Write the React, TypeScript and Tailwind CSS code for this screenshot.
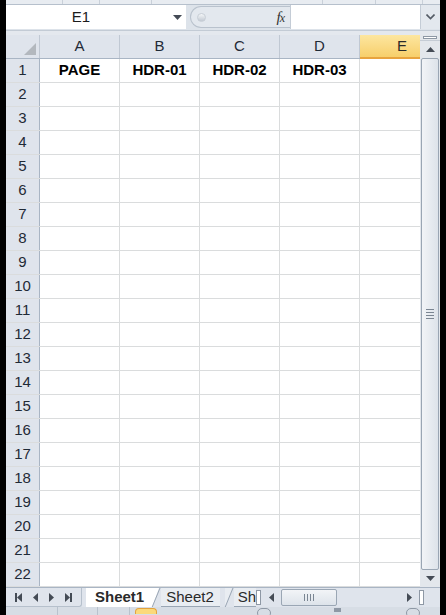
import React from "react";

const rows = Array.from({ length: 22 }, (_, i) => i + 1);
const cols = [
  { key: "A", w: "w-[80px]", hdr: "PAGE" },
  { key: "B", w: "w-[80px]", hdr: "HDR-01" },
  { key: "C", w: "w-[80px]", hdr: "HDR-02" },
  { key: "D", w: "w-[80px]", hdr: "HDR-03" },
];

const Tri = ({ dir, className = "" }: { dir: "up" | "down" | "left" | "right"; className?: string }) => {
  const pts = {
    up: "0,5 4.5,0 9,5",
    down: "0,0 9,0 4.5,5",
    left: "5,0 5,9 0,4.5",
    right: "0,0 0,9 5,4.5",
  }[dir];
  const vert = dir === "up" || dir === "down";
  return (
    <svg width={vert ? 9 : 5} height={vert ? 5 : 9} className={className}>
      <polygon points={pts} fill="#444b55" />
    </svg>
  );
};

const RibbonEdge = () => (
  <div className="h-[5px] flex bg-[#e8ecf1] border-b border-[#b6c0cc]">
    <div className="w-[57px] border-r border-[#c9d0d9]" />
    <div className="w-[37px] border-r border-[#c9d0d9]" />
    <div className="w-[52px] border-r border-[#c9d0d9]" />
    <div className="w-[171px] border-r border-[#c9d0d9]" />
    <div className="w-[53px] border-r border-[#c9d0d9]" />
    <div className="w-[47px] border-r border-[#c9d0d9]" />
  </div>
);

const FormulaBar = () => (
  <div className="h-[25px] flex bg-[#dde3ea]">
    <div className="w-[180px] h-[24px] bg-white flex items-center">
      <div className="w-[150px] text-center text-[15px] text-[#1c1c1c]">E1</div>
      <div className="flex-1 pl-[17px] flex items-center">
        <Tri dir="down" />
      </div>
    </div>
    <div className="w-[104px] h-[24px] flex items-center pl-[4px]">
      <div className="h-[22px] flex-1 rounded-l-full border border-r-0 border-[#b9c2cd] bg-[#e3e8ee] flex items-center justify-between pl-[6px] pr-[6px]">
        <div className="w-[9px] h-[9px] rounded-full bg-gradient-to-b from-[#f4f6f8] to-[#c3cad3] border border-[#c7ced6]" />
        <span className="italic text-[15px] text-[#333] font-['Liberation_Serif',serif] tracking-[-1px]">
          f<span className="text-[12px]">x</span>
        </span>
      </div>
    </div>
    <div className="w-[130px] h-[24px] bg-white border-l border-[#c4ccd6]" />
    <div className="w-[20px] h-[24px] flex items-center justify-center bg-[#e3e8ee] border-l border-[#c4ccd6]">
      <svg width="9" height="6">
        <polyline points="0.5,0.5 4.5,4.5 8.5,0.5" fill="none" stroke="#555c66" strokeWidth="1.6" />
      </svg>
    </div>
  </div>
);

const ColumnHeader = () => (
  <div className="h-[24px] flex bg-[#dfe4ec] border-b border-[#a9b5c4]">
    <div className="w-[34px] border-r border-[#c0c8d3] flex items-end justify-end pr-[3px] pb-[3px]">
      <svg width="12" height="12">
        <polygon points="12,0 12,12 0,12" fill="#b3b8be" />
      </svg>
    </div>
    {cols.map((c) => (
      <div
        key={c.key}
        className={`${c.w} border-r border-[#c0c8d3] flex items-center justify-center text-[15px] text-[#1f2a36]`}
      >
        {c.key}
      </div>
    ))}
    <div className="w-[60px] -mb-px bg-gradient-to-b from-[#fde69f] to-[#f7cf6a] border-b-2 border-[#e8a33d] flex items-center justify-center text-[15px] text-[#2a2a2a] pl-[24px]">
      E
    </div>
  </div>
);

const GridRow = ({ n }: { n: number }) => (
  <div className="h-[24px] flex border-b border-[#dadcdd]">
    <div className="w-[34px] bg-[#dfe4ec] border-r border-[#a9b5c4] flex items-center justify-center text-[15px] text-[#1f2a36]">
      {n}
    </div>
    {cols.map((c) => (
      <div
        key={c.key}
        className={`${c.w} bg-white border-r border-[#dadcdd] flex items-center justify-center text-[15px] font-bold text-black`}
      >
        {n === 1 ? c.hdr : ""}
      </div>
    ))}
    <div className="w-[60px] bg-white" />
  </div>
);

const VScroll = () => (
  <div className="w-[20px] flex flex-col bg-[#e3e7ec]">
    <div className="h-[6px] flex items-center justify-center border-b border-[#c5ccd5]">
      <div className="w-[14px] h-[3px] border border-[#8e98a5] bg-white" />
    </div>
    <div className="h-[17px] flex items-center justify-center">
      <Tri dir="up" />
    </div>
    <div className="flex-1 mx-px rounded-[2px] border border-[#9aa6b4] bg-gradient-to-r from-[#f2f4f7] to-[#dde3ea] flex items-center justify-center">
      <div className="flex flex-col gap-[2px]">
        <div className="w-[8px] h-px bg-[#7a8592]" />
        <div className="w-[8px] h-px bg-[#7a8592]" />
        <div className="w-[8px] h-px bg-[#7a8592]" />
        <div className="w-[8px] h-px bg-[#7a8592]" />
      </div>
    </div>
    <div className="h-[17px] flex items-center justify-center">
      <Tri dir="down" />
    </div>
  </div>
);

const Slant = ({ active }: { active?: boolean }) => (
  <svg width="14" height="20" className="shrink-0">
    {active && <polygon points="0,0 5,0 5,20 0,20" fill="#ffffff" />}
    <polygon points="5,0 5,19 12,0" fill={active ? "#ffffff" : "#e9edf2"} />
    <line x1="5" y1="19.5" x2="13" y2="0" stroke="#9aa6b4" strokeWidth="1" />
  </svg>
);

const TabBar = () => (
  <div className="h-[20px] flex bg-[#dfe4ec] border-t border-[#a9b5c4]">
    <div className="w-[76px] flex items-center justify-around px-[4px] border-r border-[#b6c0cc] rounded-br-[3px] border-b">
      <div className="flex items-center">
        <div className="w-[2px] h-[9px] bg-[#444b55]" />
        <Tri dir="left" />
      </div>
      <Tri dir="left" />
      <Tri dir="right" />
      <div className="flex items-center">
        <Tri dir="right" />
        <div className="w-[2px] h-[9px] bg-[#444b55]" />
      </div>
    </div>
    <div className="w-[174px] flex overflow-hidden">
      <div className="w-[4px] shrink-0" />
      <div className="shrink-0 bg-white pl-[9px] pr-[3px] flex items-center text-[15px] font-bold text-[#2a2a2a] -mt-px">
        Sheet1
      </div>
      <Slant active />
      <div className="shrink-0 bg-[#e9edf2] pl-[5px] pr-[6px] flex items-center text-[15px] text-[#2a2a2a] border-b border-[#9aa6b4]">
        Sheet2
      </div>
      <Slant />
      <div className="shrink-0 bg-[#e9edf2] pl-[4px] flex items-center text-[15px] text-[#2a2a2a] border-b border-[#9aa6b4]">
        Sheet3
      </div>
    </div>
    <div className="w-[5px] my-[2px] border border-[#8e98a5] bg-white" />
    <div className="w-[158px] flex items-center">
      <div className="w-[20px] flex justify-center">
        <Tri dir="left" />
      </div>
      <div className="w-[56px] h-[17px] rounded-[2px] border border-[#9aa6b4] bg-gradient-to-b from-[#f2f4f7] to-[#dde3ea] flex items-center justify-center gap-[2px]">
        <div className="w-px h-[7px] bg-[#7a8592]" />
        <div className="w-px h-[7px] bg-[#7a8592]" />
        <div className="w-px h-[7px] bg-[#7a8592]" />
        <div className="w-px h-[7px] bg-[#7a8592]" />
      </div>
      <div className="flex-1" />
      <div className="w-[20px] flex justify-center">
        <Tri dir="right" />
      </div>
    </div>
    <div className="w-[5px] my-[2px] border border-[#8e98a5] bg-white" />
    <div className="flex-1" />
  </div>
);

const StatusStrip = () => (
  <div className="h-[8px] flex bg-[#d7dde5] items-start">
    <div className="w-[52px] h-full border-r border-[#b9c2cd]" />
    <div className="w-[40px] h-full border-r border-[#b9c2cd]" />
    <div className="w-[32px] h-full border-r border-[#b9c2cd]" />
    <div className="w-[5px]" />
    <div className="w-[22px] h-[6px] mt-px rounded-t-[4px] border border-b-0 border-[#e3a33e] bg-[#fbd97a]" />
    <div className="w-[100px]" />
    <div className="w-[14px] h-[10px] mt-px rounded-full border border-[#8e98a5]" />
    <div className="w-[63px]" />
    <div className="w-[7px] h-[4px] mt-px bg-[#8e98a5]" />
    <div className="w-[65px]" />
    <div className="w-[14px] h-[10px] mt-px rounded-full border border-[#8e98a5]" />
  </div>
);

export default function App() {
  return (
    <div className="w-[446px] h-[615px] bg-black flex overflow-hidden font-['Liberation_Sans',Arial,sans-serif]">
      <div className="ml-[6px] w-[434px] h-full flex flex-col bg-[#dfe4ec]">
        <RibbonEdge />
        <FormulaBar />
        <div className="h-[5px] border-t border-[#c3cbd5] bg-[#e4e8ee]" />
        <div className="flex">
          <div className="w-[414px] flex flex-col">
            <ColumnHeader />
            {rows.map((n) => (
              <GridRow key={n} n={n} />
            ))}
          </div>
          <VScroll />
        </div>
        <TabBar />
        <StatusStrip />
      </div>
    </div>
  );
}
